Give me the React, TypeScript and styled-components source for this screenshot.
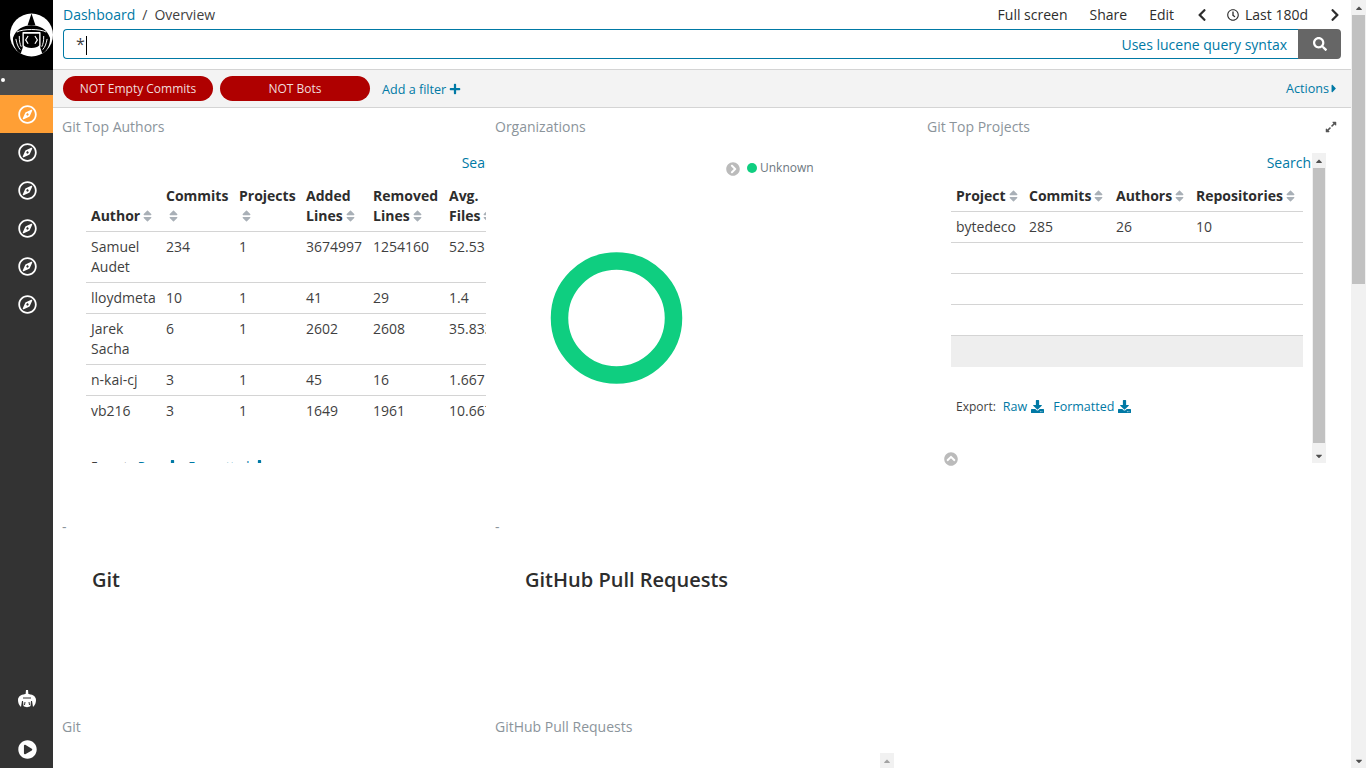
import React from 'react';
import styled, { createGlobalStyle } from 'styled-components';
import {
  FaRegCompass,
  FaPlayCircle,
  FaChevronLeft,
  FaChevronRight,
  FaRegClock,
  FaSearch,
  FaPlus,
  FaCaretRight,
  FaCaretUp,
  FaCaretDown,
  FaChevronCircleRight,
  FaChevronCircleUp,
  FaDownload,
  FaExpandAlt,
  FaSort,
} from 'react-icons/fa';

const LINK = '#0079a5';
const TEXT = '#3f3f3f';
const MUTED = '#8b949b';
const LINE = '#d4d4d4';

const GlobalStyle = createGlobalStyle`
  html, body {
    margin: 0;
    height: 768px;
    overflow: hidden;
    background: #fff;
  }
  body {
    font-family: "Open Sans", "Liberation Sans", sans-serif;
    font-size: 14px;
    color: ${TEXT};
  }
  * { box-sizing: border-box; }
`;

const Page = styled.div`
  display: flex;
  width: 1366px;
  height: 768px;
  overflow: hidden;
`;

// ===== SIDEBAR =====
const Sidebar = styled.nav`
  width: 53px;
  flex: none;
  display: flex;
  flex-direction: column;
  background: #333;
`;

const LogoBox = styled.div`
  height: 70px;
  background: #000;
  display: flex;
  align-items: center;
  padding-left: 10px;
`;

const Dots = styled.div`
  height: 25px;
  background: #4b4b4b;
  display: flex;
  align-items: center;
  padding: 0 0 5px 1px;
`;

const Dot = styled.span`
  width: 4px;
  height: 4px;
  border-radius: 50%;
  background: #fff;
`;

const NavItem = styled.a<{ $active?: boolean }>`
  height: 38px;
  display: flex;
  align-items: center;
  justify-content: center;
  padding-left: 1px;
  color: #fff;
  font-size: 19px;
  background: ${p => (p.$active ? '#ff9f35' : 'transparent')};
`;

const SidebarBottom = styled.div`
  margin-top: auto;
  display: flex;
  flex-direction: column;
  align-items: center;
  gap: 30px;
  padding: 0 0 9px 1px;
  color: #fff;
  font-size: 19px;
`;

// ===== TOP BAR =====
const Main = styled.main`
  flex: 1;
  min-width: 0;
  display: flex;
  flex-direction: column;
`;

const TopBar = styled.header`
  height: 70px;
  flex: none;
  padding: 0 10px;
  border-bottom: 1px solid ${LINE};
`;

const TopRow = styled.div`
  height: 29px;
  display: flex;
  align-items: center;
  justify-content: space-between;
`;

const Crumbs = styled.div`
  display: flex;
  gap: 7px;
  font-size: 14px;
`;

const CrumbLink = styled.a`
  color: ${LINK};
`;

const Menu = styled.div`
  display: flex;
  align-items: center;
  color: #2d2d2d;
`;

const MenuItem = styled.span`
  margin-left: 22px;
  display: inline-flex;
  align-items: center;
`;

const ClockItem = styled.span`
  margin-left: 18px;
  display: inline-flex;
  align-items: center;
  gap: 6px;
  svg { font-size: 12px; }
`;

const Arrow = styled.span`
  display: inline-flex;
  font-size: 14px;
`;

const PrevArrow = styled(Arrow)`
  margin-left: 21px;
`;

const NextArrow = styled(Arrow)`
  margin: 0 -1px 0 20px;
`;

const QueryForm = styled.div`
  display: flex;
  height: 30px;
`;

const QueryInput = styled.div`
  flex: 1;
  display: flex;
  align-items: center;
  justify-content: space-between;
  padding: 0 11px 0 12px;
  border: 1px solid ${LINK};
  border-right: none;
  border-radius: 4px 0 0 4px;
`;

const Caret = styled.span`
  display: inline-block;
  width: 1px;
  height: 19px;
  margin-left: 1px;
  background: #000;
  vertical-align: middle;
`;

const QueryText = styled.span`
  font-size: 16px;
  color: ${TEXT};
`;

const SearchButton = styled.button`
  width: 43px;
  border: none;
  border-radius: 0 4px 4px 0;
  background: #666;
  color: #fff;
  font-size: 14px;
  display: flex;
  align-items: center;
  justify-content: center;
`;

const FilterBar = styled.div`
  height: 38px;
  flex: none;
  display: flex;
  align-items: center;
  padding: 0 14px 0 10px;
  background: #f3f3f3;
  border-bottom: 1px solid ${LINE};
  font-size: 12px;
`;

const FilterPill = styled.span<{ $width: number }>`
  width: ${p => p.$width}px;
  height: 25px;
  margin-right: 7px;
  border-radius: 13px;
  display: flex;
  align-items: center;
  justify-content: center;
  background: #af0000;
  color: #f0dcdc;
`;

const AddFilter = styled.a`
  margin-left: 5px;
  padding-top: 1px;
  display: inline-flex;
  align-items: center;
  gap: 3px;
  font-size: 12.6px;
  color: ${LINK};
  svg { font-size: 12px; }
`;

const Actions = styled.a`
  margin-left: auto;
  display: inline-flex;
  align-items: center;
  gap: 2px;
  font-size: 12.6px;
  color: ${LINK};
  svg { width: 6px; height: 13px; }
`;

// ===== PANELS =====
const Dashboard = styled.div`
  flex: 1;
  min-height: 0;
  display: grid;
  grid-template-columns: 433px 432px 424px;
  grid-template-rows: 402px 200px 1fr;
  padding-left: 9px;
`;

const Panel = styled.section`
  position: relative;
  min-width: 0;
  overflow: hidden;
  display: flex;
  flex-direction: column;
`;

const PanelTitle = styled.div`
  height: 36px;
  flex: none;
  display: flex;
  align-items: center;
  font-size: 14px;
  color: ${MUTED};
`;

const ExpandIcon = styled.span`
  position: absolute;
  top: 12px;
  right: 14px;
  font-size: 12px;
  color: #555;
`;

const TableArea = styled.div<{ $width: number }>`
  width: ${p => p.$width}px;
  height: 310px;
  margin: 9px 0 0 24px;
  overflow: hidden;
`;

const SearchLink = styled.a<{ $width: number }>`
  display: block;
  width: ${p => p.$width}px;
  height: 20px;
  line-height: 20px;
  text-align: right;
  color: ${LINK};
  white-space: nowrap;
`;

const Table = styled.table<{ $width: number }>`
  width: ${p => p.$width}px;
  border-collapse: collapse;
  table-layout: fixed;
  margin-top: 8px;
`;

const Th = styled.th<{ $width: number }>`
  width: ${p => p.$width}px;
  padding: 5px;
  vertical-align: bottom;
  text-align: left;
  font-weight: 700;
  line-height: 20px;
  color: #2d2d2d;
  border-bottom: 1px solid ${LINE};
`;

const SortMark = styled(FaSort)`
  width: 9px;
  height: 14px;
  margin-left: 3px;
  color: #a9b0b7;
  vertical-align: -2px;
`;

const Td = styled.td`
  padding: 5px;
  line-height: 20px;
  vertical-align: top;
  white-space: normal;
`;

const Tr = styled.tr<{ $line?: boolean; $shade?: boolean }>`
  height: 31px;
  background: ${p => (p.$shade ? '#eee' : 'transparent')};
  td { border-bottom: ${p => (p.$line ? `1px solid ${LINE}` : 'none')}; }
`;

const ExportRow = styled.div`
  margin-top: 30px;
  padding-left: 5px;
  display: flex;
  align-items: center;
  gap: 7px;
  font-size: 12px;
  line-height: 20px;
`;

const ExportLink = styled.a`
  display: inline-flex;
  align-items: center;
  gap: 4px;
  margin-right: 2px;
  font-size: 12.5px;
  color: ${LINK};
  svg { font-size: 13px; }
`;

const InnerScroll = styled.div`
  position: absolute;
  top: 45px;
  left: 385px;
  width: 14px;
  height: 310px;
  display: flex;
  flex-direction: column;
  background: #f1f1f1;
`;

const PageScroll = styled.div`
  width: 15px;
  flex: none;
  display: flex;
  flex-direction: column;
  background: #f1f1f1;
`;

const ScrollEnd = styled.div`
  height: 15px;
  flex: none;
  display: flex;
  align-items: center;
  justify-content: center;
  font-size: 10px;
  color: #505050;
`;

const ScrollThumb = styled.div<{ $height: number }>`
  height: ${p => p.$height}px;
  margin: 0 1px;
  background: #c1c1c1;
  flex: none;
`;

const ScrollGap = styled.div`
  flex: 1;
`;

const Collapse = styled.span`
  position: absolute;
  left: 17px;
  top: 344px;
  font-size: 14px;
  line-height: 14px;
  color: #bbb;
`;

const DonutArea = styled.div`
  position: relative;
  flex: 1;
`;

const Donut = styled.svg`
  position: absolute;
  left: 55px;
  top: 108px;
`;

const Legend = styled.div`
  position: absolute;
  top: 15px;
  left: 231px;
  display: flex;
  align-items: center;
  font-size: 12px;
  color: #6d7780;
`;

const LegendToggle = styled.span`
  display: inline-flex;
  margin: 3px 7px 0 0;
  font-size: 14px;
  color: #bbb;
`;

const LegendDot = styled.span`
  width: 10px;
  height: 10px;
  margin-right: 3px;
  border-radius: 50%;
  background: #0fce80;
`;

const Dash = styled.div`
  height: 25px;
  margin-top: 4px;
  font-size: 14px;
  line-height: 25px;
  color: ${MUTED};
`;

const MarkdownTitle = styled.h3`
  margin: 27px 0 0 30px;
  font-size: 20px;
  font-weight: 600;
  line-height: 28px;
  color: #2d2d2d;
`;

const LowerTitle = styled(PanelTitle)`
  height: 32px;
`;

const SmallScrollUp = styled.span`
  position: absolute;
  top: 43px;
  left: 385px;
  width: 14px;
  height: 15px;
  display: flex;
  align-items: center;
  justify-content: center;
  background: #f1f1f1;
  color: #a3a3a3;
  font-size: 10px;
`;

// ===== LOGO =====
const Logo = () => (
  <svg width="44" height="44" viewBox="0 0 44 44">
    <circle cx="22" cy="22" r="22" fill="#fff" />
    <path d="M22 0 L18 12 L26 12 Z" fill="#000" />
    <path
      d="M3 25 C6 16 14 12 22 12 C30 12 38 16 41 25 C41 32 38 38 33 41 L31 35 L31 19 L13 19 L13 35 L11 41 C6 38 3 32 3 25 Z"
      fill="#000"
    />
    <path
      d="M7 19 C13 15.5 31 15.5 37 19 M6 26 C7 31 8 34 10.5 37 M9.5 23 C9.5 28 10 31 11.5 34 M38 26 C37 31 36 34 33.5 37 M34.5 23 C34.5 28 34 31 32.5 34"
      fill="none"
      stroke="#fff"
      strokeWidth="1"
    />
    <path d="M13.5 20 L30.5 20 L30.5 33 C27 37 17 37 13.5 33 Z" fill="#000" stroke="#fff" strokeWidth="1.2" />
    <path d="M18.5 23 L16 27 L18.5 31 M25.5 23 L28 27 L25.5 31" fill="none" stroke="#fff" strokeWidth="1.2" />
  </svg>
);

const SmallLogo = () => (
  <svg width="20" height="20" viewBox="0 0 20 20">
    <path d="M9 0 L11 0 L11.5 5 L8.5 5 Z" fill="#fff" />
    <path d="M1 10 C1 6 5 4 10 4 C15 4 19 6 19 10 C19 13 18 15 16 17 L15 11 L5 11 L4 17 C2 15 1 13 1 10 Z" fill="#fff" />
    <path d="M6 11 L14 11 L13.5 16 C12 17.5 8 17.5 6.5 16 Z" fill="#fff" />
    <path d="M6 8 L14 8 M8 12 L7.5 15 M12 12 L12.5 15" stroke="#333" strokeWidth="1" fill="none" />
  </svg>
);

// ===== DATA =====
const AUTHOR_COLS = [
  { label: 'Author', width: 75 },
  { label: 'Commits', width: 73 },
  { label: 'Projects', width: 67 },
  { label: 'Added Lines', width: 67 },
  { label: 'Removed Lines', width: 76 },
  { label: 'Avg. Files', width: 70 },
];

const AUTHOR_ROWS = [
  ['Samuel Audet', '234', '1', '3674997', '1254160', '52.53'],
  ['lloydmeta', '10', '1', '41', '29', '1.4'],
  ['Jarek Sacha', '6', '1', '2602', '2608', '35.833'],
  ['n-kai-cj', '3', '1', '45', '16', '1.667'],
  ['vb216', '3', '1', '1649', '1961', '10.667'],
];

const PROJECT_COLS = [
  { label: 'Project', width: 73 },
  { label: 'Commits', width: 87 },
  { label: 'Authors', width: 80 },
  { label: 'Repositories', width: 112 },
];

const NAV_COUNT = 6;

const ExportLinks = () => (
  <ExportRow>
    Export:
    <ExportLink>
      Raw
      <FaDownload />
    </ExportLink>
    <ExportLink>
      Formatted
      <FaDownload />
    </ExportLink>
  </ExportRow>
);

export default function App() {
  return (
    <Page>
      <GlobalStyle />
      <Sidebar>
        <LogoBox>
          <Logo />
        </LogoBox>
        <Dots>
          <Dot />
        </Dots>
        {Array.from({ length: NAV_COUNT }).map((_, i) => (
          <NavItem key={i} $active={i === 0}>
            <FaRegCompass />
          </NavItem>
        ))}
        <SidebarBottom>
          <SmallLogo />
          <FaPlayCircle />
        </SidebarBottom>
      </Sidebar>

      <Main>
        <TopBar>
          <TopRow>
            <Crumbs>
              <CrumbLink>Dashboard</CrumbLink>
              <span>/</span>
              <span>Overview</span>
            </Crumbs>
            <Menu>
              <MenuItem>Full screen</MenuItem>
              <MenuItem>Share</MenuItem>
              <MenuItem>Edit</MenuItem>
              <PrevArrow>
                <FaChevronLeft />
              </PrevArrow>
              <ClockItem>
                <FaRegClock />
                Last 180d
              </ClockItem>
              <NextArrow>
                <FaChevronRight />
              </NextArrow>
            </Menu>
          </TopRow>
          <QueryForm>
            <QueryInput>
              <span>
                <QueryText>*</QueryText>
                <Caret />
              </span>
              <CrumbLink>Uses lucene query syntax</CrumbLink>
            </QueryInput>
            <SearchButton>
              <FaSearch />
            </SearchButton>
          </QueryForm>
        </TopBar>

        <FilterBar>
          <FilterPill $width={150}>NOT Empty Commits</FilterPill>
          <FilterPill $width={150}>NOT Bots</FilterPill>
          <AddFilter>
            Add a filter
            <FaPlus />
          </AddFilter>
          <Actions>
            Actions
            <FaCaretRight />
          </Actions>
        </FilterBar>

        <Dashboard>
          <Panel>
            <PanelTitle>Git Top Authors</PanelTitle>
            <TableArea $width={400}>
              <SearchLink $width={420}>Search</SearchLink>
              <Table $width={428}>
                <thead>
                  <tr>
                    {AUTHOR_COLS.map(c => (
                      <Th key={c.label} $width={c.width}>
                        {c.label}
                        <SortMark />
                      </Th>
                    ))}
                  </tr>
                </thead>
                <tbody>
                  {AUTHOR_ROWS.map((row, i) => (
                    <Tr key={row[0]} $line={i < AUTHOR_ROWS.length - 1}>
                      {row.map((cell, j) => (
                        <Td key={j}>{cell}</Td>
                      ))}
                    </Tr>
                  ))}
                </tbody>
              </Table>
              <ExportLinks />
            </TableArea>
          </Panel>

          <Panel>
            <PanelTitle>Organizations</PanelTitle>
            <DonutArea>
              <Legend>
                <LegendToggle>
                  <FaChevronCircleRight />
                </LegendToggle>
                <LegendDot />
                Unknown
              </Legend>
              <Donut width="133" height="132" viewBox="0 0 133 132">
                <circle cx="66.5" cy="66" r="57" fill="none" stroke="#0fce80" strokeWidth="17.5" />
              </Donut>
            </DonutArea>
          </Panel>

          <Panel>
            <PanelTitle>Git Top Projects</PanelTitle>
            <ExpandIcon>
              <FaExpandAlt />
            </ExpandIcon>
            <TableArea $width={360}>
              <SearchLink $width={360}>Search</SearchLink>
              <Table $width={352}>
                <thead>
                  <tr>
                    {PROJECT_COLS.map(c => (
                      <Th key={c.label} $width={c.width}>
                        {c.label}
                        <SortMark />
                      </Th>
                    ))}
                  </tr>
                </thead>
                <tbody>
                  <Tr $line>
                    <Td>bytedeco</Td>
                    <Td>285</Td>
                    <Td>26</Td>
                    <Td>10</Td>
                  </Tr>
                  {[0, 1, 2].map(i => (
                    <Tr key={i} $line>
                      <Td colSpan={4} />
                    </Tr>
                  ))}
                  <Tr $shade>
                    <Td colSpan={4} />
                  </Tr>
                </tbody>
              </Table>
              <ExportLinks />
            </TableArea>
            <InnerScroll>
              <ScrollEnd>
                <FaCaretUp />
              </ScrollEnd>
              <ScrollThumb $height={275} />
              <ScrollGap />
              <ScrollEnd>
                <FaCaretDown />
              </ScrollEnd>
            </InnerScroll>
            <Collapse>
              <FaChevronCircleUp />
            </Collapse>
          </Panel>

          <Panel>
            <Dash>-</Dash>
            <MarkdownTitle>Git</MarkdownTitle>
          </Panel>
          <Panel>
            <Dash>-</Dash>
            <MarkdownTitle>GitHub Pull Requests</MarkdownTitle>
          </Panel>
          <Panel />

          <Panel>
            <LowerTitle>Git</LowerTitle>
          </Panel>
          <Panel>
            <LowerTitle>GitHub Pull Requests</LowerTitle>
            <SmallScrollUp>
              <FaCaretUp />
            </SmallScrollUp>
          </Panel>
          <Panel />
        </Dashboard>
      </Main>

      <PageScroll>
        <ScrollEnd>
          <FaCaretUp />
        </ScrollEnd>
        <ScrollThumb $height={269} />
        <ScrollGap />
        <ScrollEnd>
          <FaCaretDown />
        </ScrollEnd>
      </PageScroll>
    </Page>
  );
}
